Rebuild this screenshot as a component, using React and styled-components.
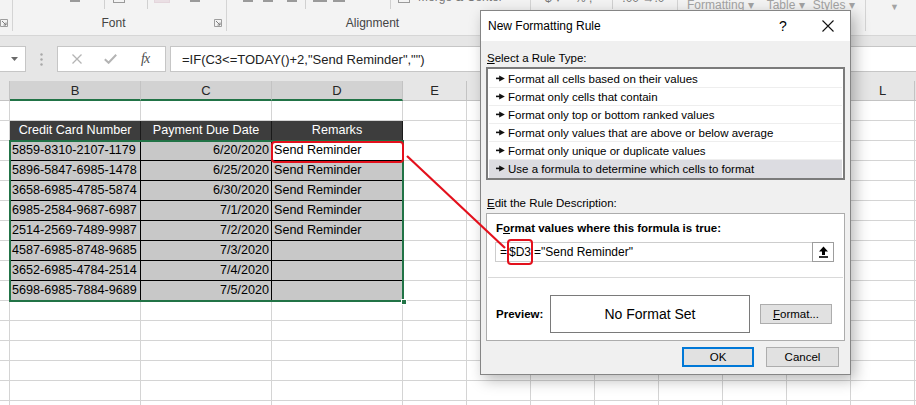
import React from 'react';
import styled, { createGlobalStyle } from 'styled-components';

const GlobalStyle = createGlobalStyle`
  html, body {
    margin: 0;
    padding: 0;
    background: #fff;
  }
  body {
    font-family: "Liberation Sans", Arial, sans-serif;
    overflow: hidden;
  }
`;

const Screen = styled.div`
  position: relative;
  width: 916px;
  height: 405px;
  overflow: hidden;
  display: flex;
  flex-direction: column;
  background: #fff;
`;

/* ---------- ribbon ---------- */

const Ribbon = styled.div`
  height: 35px;
  flex: none;
  display: flex;
  align-items: flex-start;
  background: #f3f3f3;
  border-bottom: 1px solid #d6d6d6;
`;

const Group = styled.div`
  width: ${p => p.$w}px;
  height: 31px;
  flex: none;
  display: flex;
  flex-direction: column;
  justify-content: space-between;
  border-right: ${p => (p.$last ? 'none' : '1px solid #d4d4d4')};
  box-sizing: border-box;
`;

const Strip = styled.div`
  height: 12px;
  display: flex;
  align-items: flex-start;
  overflow: hidden;
`;

const Dash = styled.span`
  flex: none;
  width: ${p => p.$w}px;
  height: 2px;
  margin-left: ${p => p.$ml}px;
  background: #9a9a9a;
`;

const StubBox = styled.span`
  flex: none;
  width: ${p => p.$w}px;
  height: 3px;
  margin-left: ${p => p.$ml}px;
  border: 1px solid ${p => (p.$pink ? '#e4d6dc' : '#9a9a9a')};
  border-top: none;
  background: ${p => (p.$pink ? '#eadfe4' : 'transparent')};
  box-sizing: border-box;
`;

const StripDivider = styled.span`
  flex: none;
  width: 1px;
  height: 9px;
  margin-left: ${p => p.$ml}px;
  background: #d0d0d0;
`;

const CutText = styled.span`
  flex: none;
  margin-left: ${p => p.$ml}px;
  margin-top: ${p => p.$mt}px;
  font-size: ${p => p.$size || 12}px;
  line-height: 14px;
  color: ${p => (p.$dim ? '#a3a3a3' : '#777')};
  white-space: nowrap;
`;

const GroupFoot = styled.div`
  height: 16px;
  display: flex;
  align-items: center;
`;

const FootSpacer = styled.span`
  flex: 1;
`;

const GroupLabel = styled.span`
  flex: 1;
  text-align: center;
  font-size: 12px;
  color: #444;
`;

const Launcher = () => (
  <svg width="8" height="8" viewBox="0 0 8 8" style={{ flex: 'none', marginRight: 4 }}>
    <path d="M0.5 0.5h7v7h-7z" fill="none" stroke="#9d9d9d" />
    <path d="M2 2l4 4M6 3.5V6H3.5" fill="none" stroke="#7d7d7d" />
  </svg>
);

/* ---------- formula bar ---------- */

const FormulaBar = styled.div`
  height: 45px;
  flex: none;
  display: flex;
  align-items: flex-start;
  padding-top: 10px;
  box-sizing: border-box;
  background: #e6e6e6;
`;

const NameBox = styled.div`
  width: 26px;
  height: 26px;
  box-sizing: border-box;
  background: #fff;
  border: 1px solid #c6c6c6;
  border-left: none;
  display: flex;
  align-items: center;
  justify-content: flex-end;
  padding-right: 7px;
`;

const Grip = styled.div`
  width: 31px;
  height: 26px;
  display: flex;
  align-items: center;
  justify-content: center;
`;

const FxBox = styled.div`
  width: 109px;
  height: 26px;
  box-sizing: border-box;
  background: #fff;
  border: 1px solid #c6c6c6;
  display: flex;
  align-items: center;
  padding-left: 14px;
  gap: 22px;
`;

const FxGlyph = styled.span`
  font-family: "Liberation Serif", "Times New Roman", serif;
  font-style: italic;
  font-size: 14px;
  color: #4d4d4d;
  margin-left: 2px;
  letter-spacing: -1px;
`;

const FormulaInput = styled.div`
  flex: 1;
  height: 26px;
  margin-left: 4px;
  box-sizing: border-box;
  background: #fff;
  border: 1px solid #c6c6c6;
  border-right: none;
  padding-left: 11px;
  display: flex;
  align-items: center;
  font-size: 13px;
  color: #222;
  white-space: nowrap;
`;

/* ---------- sheet ---------- */

const Sheet = styled.div`
  flex: 1;
  overflow: hidden;
  display: grid;
  grid-template-columns: 10px 131px 131px 131px repeat(8, 64px) 1fr;
  grid-template-rows: repeat(17, 20px);
  font-family: "Liberation Sans", Arial, sans-serif;
  font-size: 12.6px;
`;

const ColHead = styled.div`
  grid-row: 1;
  grid-column: ${p => p.$col};
  box-sizing: border-box;
  background: ${p => (p.$selected ? '#d2d2d2' : '#e6e6e6')};
  border-right: 1px solid #c3c3c3;
  border-bottom: ${p => (p.$selected ? '2px solid #217346' : '1px solid #c3c3c3')};
  display: flex;
  align-items: center;
  justify-content: center;
  font-size: 13px;
  color: #262626;
  padding-top: ${p => (p.$selected ? 1 : 0)}px;
`;

const cellTones = {
  plain: { bg: '#fff', line: '#d4d4d4', color: '#000' },
  head: { bg: '#3d3d3d', line: '#1a1a1a', color: '#fff' },
  data: { bg: '#c8c8c8', line: '#000', color: '#000' },
  active: { bg: '#fff', line: '#000', color: '#000' },
};

const Cell = styled.div`
  grid-row: ${p => p.$row};
  grid-column: ${p => p.$col};
  box-sizing: border-box;
  background: ${p => cellTones[p.$tone].bg};
  color: ${p => cellTones[p.$tone].color};
  border-right: 1px solid ${p => cellTones[p.$tone].line};
  border-bottom: 1px solid ${p => cellTones[p.$tone].line};
  padding: 0 2px;
  line-height: 19px;
  text-align: ${p => p.$align || 'left'};
  white-space: nowrap;
  overflow: hidden;
`;

const Selection = styled.div`
  grid-column: 2 / 5;
  grid-row: 4 / 12;
  margin: -1px;
  border: 2px solid #217346;
  position: relative;
  pointer-events: none;
  z-index: 1;
`;

const FillHandle = styled.span`
  position: absolute;
  right: -5px;
  bottom: -5px;
  width: 6px;
  height: 6px;
  box-sizing: border-box;
  background: #217346;
  border: 1px solid #fff;
`;

const ActiveMark = styled.div`
  grid-column: 4 / 5;
  grid-row: 4 / 5;
  margin: 0 -1px -2px -1px;
  border: 2px solid #e3101c;
  border-radius: 4px;
  pointer-events: none;
  z-index: 2;
`;

/* ---------- dialog ---------- */

const Dialog = styled.div`
  position: absolute;
  left: 480px;
  top: 10px;
  width: 371px;
  height: 365px;
  box-sizing: border-box;
  border: 1px solid #858585;
  background: #f0f0f0;
  box-shadow: 4px 5px 14px rgba(0, 0, 0, 0.28);
  display: flex;
  flex-direction: column;
  font-family: "Liberation Sans", Arial, sans-serif;
  font-size: 11.5px;
  color: #000;
  z-index: 3;
`;

const TitleBar = styled.div`
  height: 30px;
  flex: none;
  display: flex;
  align-items: center;
  background: #fff;
  padding: 0 11px 0 7px;
  font-size: 12px;
`;

const TitleText = styled.span`
  flex: 1;
`;

const TitleHelp = styled.span`
  width: 20px;
  margin-right: 24px;
  text-align: center;
  font-size: 14px;
`;

const TitleClose = styled.span`
  width: 22px;
  display: flex;
  justify-content: center;
`;

const Body = styled.div`
  flex: 1;
  display: flex;
  flex-direction: column;
  padding: 10px 5px 8px 5px;
`;

const SectionLabel = styled.div`
  line-height: 14px;
  margin-top: ${p => p.$mt || 0}px;
  padding-left: 1px;
`;

const RuleList = styled.div`
  margin-top: 2px;
  height: 113px;
  box-sizing: border-box;
  border: 2px solid #7b7b7b;
  background: #fff;
  padding: 1px;
`;

const RuleItem = styled.div`
  height: 18px;
  box-sizing: border-box;
  display: flex;
  align-items: center;
  gap: 3px;
  padding-left: 7px;
  background: ${p => (p.$selected ? '#dcdce1' : 'transparent')};
  border-bottom: 1px solid ${p => (p.$selected ? '#dcdce1' : '#eeeeee')};
`;

const DescBox = styled.div`
  margin-top: 3px;
  height: 128px;
  box-sizing: border-box;
  border: 1px solid #acacac;
  background: #fff;
  padding: 7px 10px 7px 8px;
  display: flex;
  flex-direction: column;
`;

const BoldLabel = styled.div`
  font-weight: bold;
  line-height: 14px;
  padding-left: 1px;
`;

const FormulaField = styled.div`
  margin-top: 7px;
  height: 20px;
  box-sizing: border-box;
  border: 1px solid #cdcdcd;
  display: flex;
  align-items: center;
`;

const FieldText = styled.div`
  flex: 1;
  display: flex;
  align-items: center;
  padding-left: 4px;
  font-size: 12px;
  white-space: pre;
`;

const RefMark = styled.span`
  display: inline-flex;
  align-items: center;
  height: 26px;
  box-sizing: border-box;
  border: 2px solid #e3101c;
  border-radius: 4px;
  margin: 0 1px 0 0;
`;

const CollapseButton = styled.div`
  width: 22px;
  height: 20px;
  margin: -1px -1px -1px 0;
  box-sizing: border-box;
  border: 1px solid #9d9d9d;
  background: #fff;
  display: flex;
  align-items: center;
  justify-content: center;
`;

const Rule = styled.div`
  margin: 15px -9px 0 -7px;
  height: 1px;
  background: #d9d9d9;
`;

const PreviewRow = styled.div`
  margin-top: 17px;
  height: 38px;
  display: flex;
  align-items: center;
`;

const PreviewLabel = styled.span`
  width: 55px;
  font-weight: bold;
  padding-left: 1px;
  box-sizing: border-box;
`;

const PreviewBox = styled.div`
  width: 200px;
  height: 38px;
  box-sizing: border-box;
  border: 1px solid #7a7a7a;
  display: flex;
  align-items: center;
  justify-content: center;
  font-size: 14px;
`;

const Button = styled.button`
  width: ${p => p.$w || 72}px;
  height: 20px;
  box-sizing: border-box;
  margin: 0;
  padding: 0;
  background: #e1e1e1;
  border: ${p => (p.$primary ? '2px solid #0078d7' : '1px solid #adadad')};
  font: inherit;
  color: #000;
  margin-left: ${p => p.$ml || 0}px;
`;

const Footer = styled.div`
  margin-top: 6px;
  padding-right: 6px;
  display: flex;
  justify-content: flex-end;
  gap: 12px;
`;

const Callout = styled.svg`
  position: absolute;
  left: 0;
  top: 0;
  pointer-events: none;
  z-index: 4;
`;

/* ---------- data ---------- */

const COLS = ['', 'B', 'C', 'D', 'E', 'F', 'G', 'H', 'I', 'J', 'K', 'L', ''];

const HEADERS = ['Credit Card Number', 'Payment Due Date', 'Remarks'];

const RECORDS = [
  ['5859-8310-2107-1179', '6/20/2020', 'Send Reminder'],
  ['5896-5847-6985-1478', '6/25/2020', 'Send Reminder'],
  ['3658-6985-4785-5874', '6/30/2020', 'Send Reminder'],
  ['6985-2584-9687-6987', '7/1/2020', 'Send Reminder'],
  ['2514-2569-7489-9987', '7/2/2020', 'Send Reminder'],
  ['4587-6985-8748-9685', '7/3/2020', ''],
  ['3652-6985-4784-2514', '7/4/2020', ''],
  ['5698-6985-7884-9689', '7/5/2020', ''],
];

const RULE_TYPES = [
  'Format all cells based on their values',
  'Format only cells that contain',
  'Format only top or bottom ranked values',
  'Format only values that are above or below average',
  'Format only unique or duplicate values',
  'Use a formula to determine which cells to format',
];

const ItemArrow = () => (
  <svg width="9" height="7" viewBox="0 0 9 7" style={{ flex: 'none' }}>
    <rect x="0" y="2.6" width="4" height="1.6" fill="#111" />
    <path d="M3.2 0.4L8.8 3.4L3.2 6.6z" fill="#111" />
  </svg>
);

// r: 0-based sheet row (0 = row 1), c: 0-based column (0 = A)
const renderCell = (r, c) => {
  const key = `${r}-${c}`;
  const pos = { $row: r + 2, $col: c + 1 };
  const inTable = c >= 1 && c <= 3;
  if (inTable && r === 1) {
    return <Cell key={key} {...pos} $tone="head" $align="center">{HEADERS[c - 1]}</Cell>;
  }
  if (inTable && r >= 2 && r <= 9) {
    const rec = RECORDS[r - 2];
    const tone = r === 2 && c === 3 ? 'active' : 'data';
    return (
      <Cell key={key} {...pos} $tone={tone} $align={c === 2 ? 'right' : 'left'}>
        {rec[c - 1]}
      </Cell>
    );
  }
  return <Cell key={key} {...pos} $tone="plain" />;
};

export default function App() {
  return (
    <>
      <GlobalStyle />
      <Screen>
        <Ribbon>
          <Group $w={13}>
            <Strip />
            <GroupFoot>
              <FootSpacer />
              <Launcher />
            </GroupFoot>
          </Group>
          <Group $w={214}>
            <Strip>
              <Dash $w={10} $ml={57} />
              <StripDivider $ml={24} />
              <StubBox $w={12} $ml={8} />
              <StripDivider $ml={22} />
              <StubBox $w={16} $ml={6} $pink />
              <Dash $w={10} $ml={20} />
            </Strip>
            <GroupFoot>
              <GroupLabel>Font</GroupLabel>
              <Launcher />
            </GroupFoot>
          </Group>
          <Group $w={304}>
            <Strip>
              <Dash $w={10} $ml={16} />
              <Dash $w={10} $ml={10} />
              <Dash $w={10} $ml={14} />
              <StripDivider $ml={8} />
              <Dash $w={14} $ml={7} />
              <Dash $w={12} $ml={6} />
              <StripDivider $ml={45} />
              <StubBox $w={12} $ml={7} />
              <CutText $ml={8} $mt={-10}>Merge &amp; Center</CutText>
            </Strip>
            <GroupFoot>
              <GroupLabel>Alignment</GroupLabel>
              <Launcher />
            </GroupFoot>
          </Group>
          <Group $w={147}>
            <Strip>
              <CutText $ml={14} $mt={-9}>$ ▾</CutText>
              <CutText $ml={14} $mt={-9}>% ,</CutText>
              <StripDivider $ml={20} />
              <CutText $ml={9} $mt={-9}>.00 →.0</CutText>
            </Strip>
            <GroupFoot>
              <GroupLabel>Number</GroupLabel>
            </GroupFoot>
          </Group>
          <Group $w={188}>
            <Strip>
              <CutText $ml={9} $mt={-2} $dim>Formatting ▾</CutText>
              <CutText $ml={13} $mt={-2} $dim>Table ▾</CutText>
              <CutText $ml={8} $mt={-2} $dim>Styles ▾</CutText>
            </Strip>
            <GroupFoot>
              <GroupLabel>Styles</GroupLabel>
            </GroupFoot>
          </Group>
          <Group $w={50} $last>
            <Strip>
              <CutText $ml={24} $mt={0} $size={9} $dim>▼</CutText>
            </Strip>
          </Group>
        </Ribbon>

        <FormulaBar>
          <NameBox>
            <svg width="7" height="4" viewBox="0 0 7 4">
              <path d="M0 0h7L3.5 4z" fill="#6a6a6a" />
            </svg>
          </NameBox>
          <Grip>
            <svg width="3" height="13" viewBox="0 0 3 13">
              <circle cx="1.5" cy="1.5" r="1.2" fill="#a8a8a8" />
              <circle cx="1.5" cy="6.5" r="1.2" fill="#a8a8a8" />
              <circle cx="1.5" cy="11.5" r="1.2" fill="#a8a8a8" />
            </svg>
          </Grip>
          <FxBox>
            <svg width="10" height="10" viewBox="0 0 10 10">
              <path d="M0.5 0.5l9 9M9.5 0.5l-9 9" stroke="#b4b4b4" strokeWidth="1.3" />
            </svg>
            <svg width="13" height="10" viewBox="0 0 13 10">
              <path d="M0.8 5.2l3.8 3.6L12.2 0.8" fill="none" stroke="#b4b4b4" strokeWidth="2" />
            </svg>
            <FxGlyph>fx</FxGlyph>
          </FxBox>
          <FormulaInput>=IF(C3&lt;=TODAY()+2,"Send Reminder","")</FormulaInput>
        </FormulaBar>

        <Sheet>
          {COLS.map((c, i) => (
            <ColHead key={`h${i}`} $col={i + 1} $selected={i >= 1 && i <= 3}>{c}</ColHead>
          ))}
          {Array.from({ length: 16 }).map((_, r) => COLS.map((_, c) => renderCell(r, c)))}
          <Selection>
            <FillHandle />
          </Selection>
          <ActiveMark />
        </Sheet>

        <Dialog>
          <TitleBar>
            <TitleText>New Formatting Rule</TitleText>
            <TitleHelp>?</TitleHelp>
            <TitleClose>
              <svg width="12" height="12" viewBox="0 0 12 12">
                <path d="M0.5 0.5l11 11M11.5 0.5l-11 11" stroke="#111" strokeWidth="1.1" />
              </svg>
            </TitleClose>
          </TitleBar>
          <Body>
            <SectionLabel><u>S</u>elect a Rule Type:</SectionLabel>
            <RuleList>
              {RULE_TYPES.map((t, i) => (
                <RuleItem key={t} $selected={i === RULE_TYPES.length - 1}>
                  <ItemArrow />
                  <span>{t}</span>
                </RuleItem>
              ))}
            </RuleList>
            <SectionLabel $mt={16}><u>E</u>dit the Rule Description:</SectionLabel>
            <DescBox>
              <BoldLabel>F<u>o</u>rmat values where this formula is true:</BoldLabel>
              <FormulaField>
                <FieldText>
                  =<RefMark>$D3</RefMark>="Send Reminder"
                </FieldText>
                <CollapseButton>
                  <svg width="11" height="12" viewBox="0 0 11 12">
                    <path d="M5.5 0.5L1 5.5h3V9h3V5.5h3z" fill="#000" />
                    <rect x="1" y="10.2" width="9" height="1.6" fill="#000" />
                  </svg>
                </CollapseButton>
              </FormulaField>
              <Rule />
              <PreviewRow>
                <PreviewLabel>Preview:</PreviewLabel>
                <PreviewBox>No Format Set</PreviewBox>
                <Button $ml={10}><u>F</u>ormat...</Button>
              </PreviewRow>
            </DescBox>
            <Footer>
              <Button $primary>OK</Button>
              <Button $w={73}>Cancel</Button>
            </Footer>
          </Body>
        </Dialog>

        <Callout width="916" height="405" viewBox="0 0 916 405">
          <line x1="407" y1="156" x2="505" y2="248" stroke="#e3101c" strokeWidth="2.2" />
        </Callout>
      </Screen>
    </>
  );
}
